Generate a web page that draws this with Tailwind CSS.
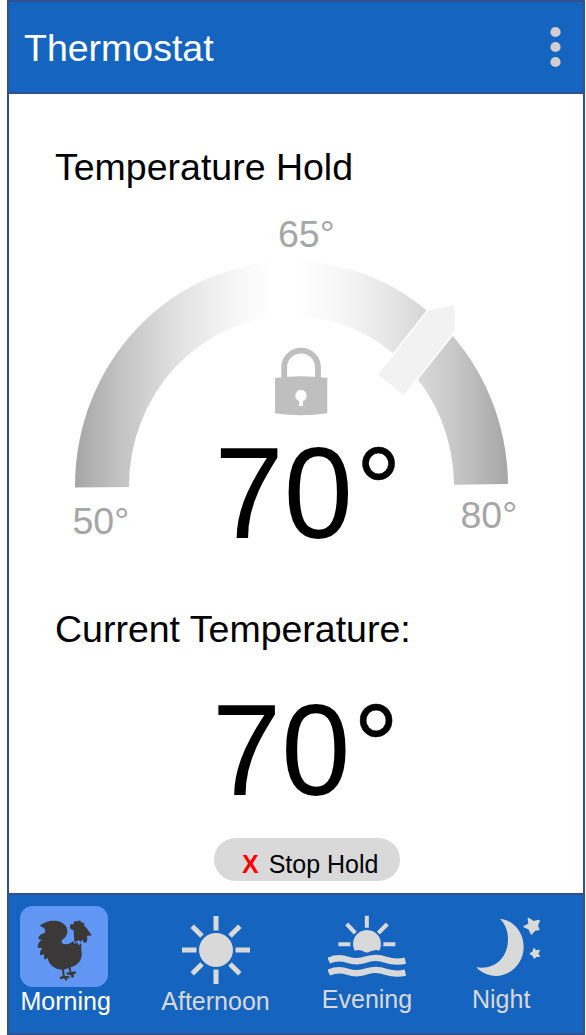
<!DOCTYPE html>
<html lang="en">
<head>
<meta charset="utf-8">
<title>Thermostat</title>
<script src="https://cdn.jsdelivr.net/npm/@tailwindcss/browser@4"></script>
</head>
<body class="bg-white font-['Liberation_Sans',Arial,sans-serif] text-black">
<div class="ml-[7px] flex h-[1035px] w-[578px] flex-col border-2 border-[#2f528f] bg-white">
  <header class="flex h-[92px] shrink-0 items-center justify-between border-b-2 border-[#2f528f] bg-[#1565c0] pr-[22px] pl-[15px]">
    <h1 class="pt-[2px] text-[37.5px] leading-[44px] text-white">Thermostat</h1>
    <svg class="h-[42px] w-[11px]" viewBox="0 0 11 42" fill="#d0cece"><circle cx="5.5" cy="6" r="5.1"/><circle cx="5.5" cy="21" r="5.1"/><circle cx="5.5" cy="36" r="5.1"/></svg>
  </header>

  <main class="flex h-[799px] shrink-0 flex-col">
    <h2 class="mt-[51px] ml-[46px] text-[37.5px] leading-[44px]">Temperature Hold</h2>
    <svg class="mt-[11px] ml-[51px] h-[380px] w-[470px] shrink-0" viewBox="60 200 470 380" font-family="Liberation Sans, Arial, sans-serif">
      <defs>
        <linearGradient id="dial" gradientUnits="userSpaceOnUse" x1="75" y1="0" x2="508" y2="0">
          <stop offset="0" stop-color="#a6a6a6"/>
          <stop offset=".125" stop-color="#c8c8c8"/>
          <stop offset=".25" stop-color="#e4e4e4"/>
          <stop offset=".37" stop-color="#f7f7f7"/>
          <stop offset=".46" stop-color="#ffffff"/>
          <stop offset=".51" stop-color="#ffffff"/>
          <stop offset=".62" stop-color="#f6f6f6"/>
          <stop offset=".74" stop-color="#e4e4e4"/>
          <stop offset=".875" stop-color="#c8c8c8"/>
          <stop offset="1" stop-color="#a6a6a6"/>
        </linearGradient>
      </defs>
      <path fill="url(#dial)" d="M75 487.5A216.5 225 0 0 1 290 261A216.5 225 0 0 1 508 484L454 484.8A162.5 170 0 0 0 290.5 316A162.5 170 0 0 0 129 487Z"/>
      <path fill="#f2f2f2" stroke="#fff" stroke-width="1.6" d="M376.9 375L428 309.7L455.4 304L455.6 331.2L403.8 396Z"/>
      <path fill="none" stroke="#bfbfbf" stroke-width="5.800" d="M284.200 379V367.500A16.900 16.900 0 0 1 318 367.500V379"/>
      <path fill="#bfbfbf" d="M275 378Q301 374.500 327.300 378V413.300Q301 417 275 413.300Z"/>
      <path fill="#fff" d="M299 406V400.900A5.700 5.700 0 1 1 303 400.900V406Z"/>
      <g fill="#a6a6a6" font-size="37.5">
        <text x="278" y="247">65°</text>
        <text x="72.500" y="534">50°</text>
        <text x="460.500" y="528">80°</text>
      </g>
      <text transform="translate(214.500 537.500) scale(.96 1)" font-size="129.500">70<tspan font-size="119" dx="3" dy="-7.500" stroke="#000" stroke-width=".5">°</tspan></text>
    </svg>
    <h2 class="mt-[27px] ml-[46px] text-[37.5px] leading-[44px]">Current Temperature:</h2>
    <svg class="mt-[18px] ml-[191px] h-[169px] w-[220px] shrink-0 overflow-visible" viewBox="200 670 220 169" font-family="Liberation Sans, Arial, sans-serif">
      <text transform="translate(212 795.500) scale(.96 1)" font-size="129.500">70<tspan font-size="119" dx="3" dy="-7.500" stroke="#000" stroke-width=".5">°</tspan></text>
    </svg>
    <button class="ml-[205px] flex h-[43px] w-[186px] shrink-0 items-center rounded-full bg-[#d9d9d9] pt-[8px] pl-[28px] text-[25px] leading-[28px]"><b class="mr-[10px] text-[#ff0000]">X</b>Stop Hold</button>
  </main>

  <nav class="flex grow border-t-2 border-[#2f528f] bg-[#1565c0] text-[25px] leading-[28px] text-[#d9d9d9]">
    <a class="ml-[11px] flex w-[90px] flex-col pt-[11px] text-white">
      <svg class="h-[81px] w-[88px]" viewBox="60 48 264 243"><rect x="60" y="48" width="264" height="243" rx="38" fill="#6196f5"/>
        <path fill="#3b3838" d="M119 108C134 93 165 87 186 98C208 110 206 137 189 148C180 155 185 162 198 163C208 163 213 158 219 154L225 162L231 157L237 166L243 160C246 168 242 175 245 187C248 211 231 228 212 232L214 246L226 244L229 250L221 253L222 262L215 263L211 254L202 254L198 249L209 246L205 234L192 239L194 257L208 259L209 265L201 265V271L196 272L193 265L181 268L179 262L188 258L186 239C164 237 146 225 143 203L135 209C132 205 131 200 133 193L121 196C118 189 121 181 127 174L113 173C112 164 117 155 125 150L115 147C116 138 123 131 133 130C140 121 133 112 119 108Z"/>
        <path fill="#3b3838" d="M223 154L221 120C215 119 209 116 210 110C209 103 216 100 221 104C218 96 226 90 231 95C236 89 244 91 244 98C251 95 256 102 252 108C261 112 265 124 276 136L260 138C264 145 262 158 255 159C249 158 249 151 246 148L243 157L237 151L230 153L227 158Z"/>
      </svg>
      <span class="ml-[.5px]">Morning</span>
    </a>
    <a class="ml-[51.500px] flex w-[108px] flex-col items-center pt-[21px]">
      <svg class="ml-px h-[68px] w-[68px]" viewBox="-34 -34 68 68" fill="none" stroke="#d9d9d9" stroke-width="5"><circle r="17" fill="#d9d9d9" stroke="none"/><path d="M0-34V-19.500M0 34V19.500M-34 0H-19.500M34 0H19.500M-23.800-23.800L-14-14M23.800 23.800L14 14M-23.800 23.800L-14 14M23.800-23.800L14-14"/></svg>
      <span class="mt-[3px]">Afternoon</span>
    </a>
    <a class="ml-[52.500px] flex w-[90px] flex-col items-center pt-[20px]">
      <svg class="-ml-px h-[62px] w-[78px]" viewBox="83 73 234 186" fill="none" stroke="#d9d9d9" stroke-width="12">
        <path fill="#d9d9d9" stroke="none" d="M163 180A42 42 0 1 1 237 180Q230 177 223 179Q212 181 206 184Q200 187 193 184Q178 175 163 180Z"/>
        <path d="M199.500 75V111M114 161H150M249 161H285M139 100L165 127M261 100L234 127"/>
        <path stroke-width="19" d="M85 210Q113 197 142 207Q170 217 200 206Q228 197 256 207Q286 217 315 210M85 246Q113 233 142 243Q170 253 200 242Q228 233 256 243Q286 253 315 246"/>
      </svg>
      <span class="mt-[8px]">Evening</span>
    </a>
    <a class="ml-[60px] flex w-[68px] flex-col pt-[20px]">
      <svg class="ml-[4px] h-[62px] w-[66px]" viewBox="89 75 198 186" fill="#d9d9d9">
        <path d="M161 87C202 90 232 127 232 171C232 219 193 258 149 258C126 258 104 248 90 232C146 241 185 202 185 147C185 123 177 102 161 87Z"/>
        <path stroke="#d9d9d9" stroke-width="4" stroke-linejoin="round" d="M246 85L261 95L279 91L273 107L278 119L266 120L255 132L248 117L233 110L248 102ZM263 176L268 183L279 181L274 190L279 199L270 198L264 204L260 196L252 191L260 186Z"/>
      </svg>
      <span class="mt-[8px]">Night</span>
    </a>
  </nav>
</div>
</body>
</html>
